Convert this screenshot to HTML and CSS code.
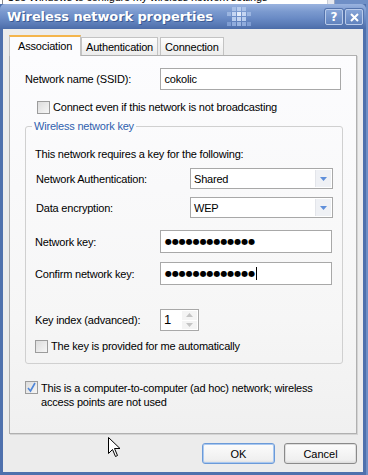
FILE: index.html
```html
<!DOCTYPE html>
<html lang="en">
<head>
    <meta charset="UTF-8">
    <title>Wireless network properties</title>
    <link rel="stylesheet" href="styles.css">
</head>
<body>
    <div class="behind">
        <div class="behind-text"><span class="behind-check"></span>Use Windows to configure my wireless network settings</div>
        <div class="behind-scroll"></div>
    </div>

    <div class="window">
        <div class="titlebar">
            <div class="title">Wireless network properties</div>
            <svg class="pattern" width="26" height="20" viewBox="0 0 26 20">
                <rect x="6" y="0" width="4" height="4" fill="#a9c0e6"/>
                <rect x="11" y="0" width="4" height="4" fill="#b8cdee"/>
                <rect x="16" y="0" width="4" height="4" fill="#a9c0e6"/>
                <rect x="1" y="5" width="4" height="4" fill="#9bb5e0"/>
                <rect x="6" y="5" width="4" height="4" fill="#c6d6f2"/>
                <rect x="11" y="5" width="4" height="4" fill="#e4ecf9"/>
                <rect x="16" y="5" width="4" height="4" fill="#c6d6f2"/>
                <rect x="21" y="5" width="4" height="4" fill="#9bb5e0"/>
                <rect x="6" y="10" width="4" height="4" fill="#b8cdee"/>
                <rect x="11" y="10" width="4" height="4" fill="#c6d6f2"/>
                <rect x="16" y="10" width="4" height="4" fill="#b8cdee"/>
                <rect x="1" y="15" width="4" height="4" fill="#7f9dd2"/>
                <rect x="6" y="15" width="4" height="4" fill="#8fabdc"/>
                <rect x="11" y="15" width="4" height="4" fill="#9bb5e0"/>
                <rect x="16" y="15" width="4" height="4" fill="#8fabdc"/>
                <rect x="21" y="15" width="4" height="4" fill="#7f9dd2"/>
            </svg>
            <div class="caption-buttons">
                <div class="cap-btn">?</div>
                <div class="cap-btn">
                    <svg width="9" height="9" viewBox="0 0 9 9">
                        <path d="M1 1 L8 8 M8 1 L1 8" stroke="#fff" stroke-width="2"/>
                    </svg>
                </div>
            </div>
        </div>

        <div class="client">
            <div class="tabs">
                <div class="tab active">Association</div>
                <div class="tab">Authentication</div>
                <div class="tab">Connection</div>
            </div>

            <div class="panel">
                <div class="row ssid-row">
                    <label class="lbl-wide">Network name (SSID):</label>
                    <div class="textbox ssid">cokolic</div>
                </div>

                <div class="check-row indent">
                    <span class="checkbox"></span>
                    <span>Connect even if this network is not broadcasting</span>
                </div>

                <div class="group">
                    <div class="legend">Wireless network key</div>
                    <div class="group-intro">This network requires a key for the following:</div>

                    <div class="row sel-row">
                        <label class="lbl-sel">Network Authentication:</label>
                        <div class="combo">
                            <span>Shared</span>
                            <span class="combo-btn">
                                <svg width="7" height="4" viewBox="0 0 7 4"><path d="M0 0 H7 L3.5 4 Z" fill="#5f8fda"/></svg>
                            </span>
                        </div>
                    </div>
                    <div class="row sel-row">
                        <label class="lbl-sel">Data encryption:</label>
                        <div class="combo">
                            <span>WEP</span>
                            <span class="combo-btn">
                                <svg width="7" height="4" viewBox="0 0 7 4"><path d="M0 0 H7 L3.5 4 Z" fill="#5f8fda"/></svg>
                            </span>
                        </div>
                    </div>

                    <div class="row key-row first-key">
                        <label class="lbl-key">Network key:</label>
                        <div class="textbox key"><span class="dots">●●●●●●●●●●●●●</span></div>
                    </div>
                    <div class="row key-row">
                        <label class="lbl-key">Confirm network key:</label>
                        <div class="textbox key"><span class="dots">●●●●●●●●●●●●●</span><span class="caret"></span></div>
                    </div>

                    <div class="row index-row">
                        <label class="lbl-key">Key index (advanced):</label>
                        <div class="spin">
                            <span class="spin-val">1</span>
                            <span class="spin-btns">
                                <span class="spin-btn"><svg width="7" height="4" viewBox="0 0 7 4"><path d="M0 4 H7 L3.5 0 Z" fill="#c4c4c4"/></svg></span>
                                <span class="spin-btn"><svg width="7" height="4" viewBox="0 0 7 4"><path d="M0 0 H7 L3.5 4 Z" fill="#c4c4c4"/></svg></span>
                            </span>
                        </div>
                    </div>

                    <div class="check-row auto-row">
                        <span class="checkbox"></span>
                        <span>The key is provided for me automatically</span>
                    </div>
                </div>

                <div class="check-row adhoc">
                    <span class="checkbox checked">
                        <svg width="11" height="11" viewBox="0 0 11 11"><path d="M2 6 L4.5 9 L9 1" stroke="#4f86d9" stroke-width="1.6" fill="none"/></svg>
                    </span>
                    <span>This is a computer-to-computer (ad hoc) network; wireless access points are not used</span>
                </div>
            </div>

            <div class="buttons">
                <button class="btn default">OK</button>
                <button class="btn">Cancel</button>
            </div>
        </div>
    </div>

    <svg class="cursor" width="13" height="21" viewBox="0 0 13 21">
        <path d="M0.5 0.5 L0.5 16.5 L4.5 12.5 L7.5 19.5 L9.5 18.5 L6.5 11.5 L12 11.5 Z" fill="#fff" stroke="#000" stroke-width="1"/>
    </svg>
</body>
</html>
```

FILE: styles.css
```css
* {
    margin: 0;
    padding: 0;
    box-sizing: border-box;
}

html, body {
    width: 368px;
    height: 475px;
    overflow: hidden;
}

body {
    font-family: 'Liberation Sans', Arial, sans-serif;
    font-size: 11px;
    letter-spacing: -0.2px;
    color: #000;
    background: #6f8fc6;
    position: relative;
}

/* strip of the window behind the dialog */
.behind {
    height: 4px;
    display: flex;
    overflow: hidden;
}

.behind-text {
    width: 327px;
    height: 13px;
    background: #fff;
    font-size: 11px;
    line-height: 13px;
    white-space: nowrap;
    overflow: hidden;
    position: relative;
    top: -9px;
    display: flex;
    align-items: flex-start;
}

.behind-check {
    width: 3px;
    height: 13px;
    border-right: 1px solid #8a8a8a;
    margin-right: 4px;
}

.behind-scroll {
    width: 8px;
    background: #e6e8ee;
    border-left: 1px solid #c9ced8;
    border-right: 1px solid #9aa6bf;
}

.window {
    width: 366px;
    height: 471px;
    background: #4f71ad;
    padding: 0 3px 3px 3px;
    display: flex;
    flex-direction: column;
}

.titlebar {
    height: 25px;
    margin: 0 -3px;
    padding: 0 3px 0 7px;
    background: linear-gradient(#9ab3df 0%, #7b9acf 30%, #6b8cc6 55%, #5778b4 85%, #4b6ca8 100%);
    display: flex;
    align-items: center;
    border-radius: 5px 5px 0 0;
}

.title {
    color: #fff;
    font-family: 'DejaVu Sans', sans-serif;
    font-weight: bold;
    font-size: 13px;
    letter-spacing: -0.1px;
    text-shadow: 1px 1px 0 #3a5a94;
    flex: 1;
}

.pattern {
    margin-right: 73px;
}

.caption-buttons {
    display: flex;
    gap: 2px;
    margin-top: 1px;
}

.cap-btn {
    width: 18px;
    height: 16px;
    border: 1px solid #b9cbea;
    border-radius: 2px;
    box-shadow: 0 0 0 1px #5574ad;
    background: linear-gradient(#86a4d7, #6183be);
    color: #fff;
    font-weight: bold;
    font-size: 12px;
    display: flex;
    align-items: center;
    justify-content: center;
    font-family: 'DejaVu Sans', sans-serif;
}

.client {
    flex: 1;
    background: #ececec;
    padding: 6px 6px 0 6px;
    display: flex;
    flex-direction: column;
}

.tabs {
    display: flex;
    align-items: flex-end;
    height: 20px;
    position: relative;
    z-index: 1;
}

.tab {
    height: 18px;
    padding: 0 4px;
    border: 1px solid #c3c3c3;
    border-bottom: none;
    background: linear-gradient(#fdfdfd, #ececec);
    display: flex;
    align-items: center;
    margin-right: 2px;
}

.tab.active {
    height: 21px;
    margin-bottom: -1px;
    margin-right: 0;
    background: #fcfcfe;
    border-top: 2px solid #f4b54c;
    padding: 0 8px 1px 8px;
}

.panel {
    height: 379px;
    width: 348px;
    border: 1px solid #b0b0b0;
    background: linear-gradient(#fcfcfe 0%, #f6f6f6 70%, #f0f0f0 100%);
    padding: 12px 15px 0 15px;
    box-shadow: 1px 1px 0 #d4d4d4;
}

.row {
    display: flex;
    align-items: center;
}

.lbl-wide {
    width: 135px;
}

.textbox {
    height: 23px;
    border: 1px solid #a8a8a8;
    background: #fff;
    display: flex;
    align-items: center;
    padding-left: 4px;
}

.ssid {
    width: 182px;
    height: 22px;
}

.check-row {
    display: flex;
    align-items: flex-start;
    gap: 3px;
}

.indent {
    margin-top: 11px;
    margin-left: 12px;
}

.checkbox {
    width: 13px;
    height: 13px;
    border: 1px solid #9c9c9c;
    background: linear-gradient(135deg, #dcdcdc, #f6f6f6);
    flex-shrink: 0;
    display: flex;
    align-items: center;
    justify-content: center;
}

.group {
    margin-top: 12px;
    height: 238px;
    width: 318px;
    border: 1px solid #d0d0d0;
    border-radius: 3px;
    padding: 0 9px;
}

.legend {
    color: #2f5fae;
    background: #fbfbfc;
    display: inline-block;
    padding: 0 2px;
    margin: -7px 0 0 -3px;
    line-height: 13px;
    vertical-align: top;
}

.group-intro {
    margin-top: 9px;
}

.sel-row {
    margin-top: 8px;
    height: 21px;
}

.lbl-sel {
    width: 155px;
    padding-left: 1px;
}

.combo {
    width: 143px;
    height: 21px;
    border: 1px solid #a8a8a8;
    background: #fff;
    display: flex;
    align-items: center;
    padding-left: 3px;
}

.combo span:first-child {
    flex: 1;
}

.combo-btn {
    width: 16px;
    height: 17px;
    margin-right: 1px;
    background: #eff1f5;
    border-left: 1px solid #e3e5ea;
    display: flex;
    align-items: center;
    justify-content: center;
}

.key-row {
    height: 23px;
}

.first-key {
    margin-top: 12px;
}

.key-row + .key-row {
    margin-top: 9px;
}

.lbl-key {
    width: 125px;
}

.key {
    width: 172px;
    padding-left: 4px;
}

.dots {
    font-family: 'DejaVu Sans', sans-serif;
    font-size: 8px;
    letter-spacing: -0.05px;
}

.caret {
    width: 1px;
    height: 13px;
    background: #000;
    margin-left: 1px;
}

.index-row {
    margin-top: 24px;
    height: 22px;
}

.spin {
    width: 39px;
    height: 22px;
    border: 1px solid #a8a8a8;
    background: #fff;
    display: flex;
    padding: 1px;
}

.spin-val {
    flex: 1;
    padding-left: 2px;
    font-size: 13px;
    line-height: 18px;
}

.spin-btns {
    width: 15px;
    display: flex;
    flex-direction: column;
    gap: 1px;
}

.spin-btn {
    flex: 1;
    background: #f4f4f4;
    display: flex;
    align-items: center;
    justify-content: center;
}

.auto-row {
    margin-top: 9px;
}

.adhoc {
    margin-top: 17px;
    line-height: 14px;
    width: 300px;
}

.adhoc span:last-child {
    width: 285px;
}

.buttons {
    display: flex;
    justify-content: flex-end;
    gap: 9px;
    margin-top: 9px;
}

.btn {
    width: 73px;
    height: 21px;
    font-family: 'Liberation Sans', Arial, sans-serif;
    font-size: 11px;
    background: linear-gradient(#fcfcfc, #efefef 85%, #dcdcdc);
    border: 1px solid #8a8a8a;
    border-radius: 3px;
    box-shadow: inset 0 0 0 1px #dedede;
    color: #000;
}

.btn.default {
    border-color: #6b9ad8;
    box-shadow: inset 0 0 0 1px #a9c8f0;
}

.cursor {
    position: absolute;
    left: 108px;
    top: 437px;
}
```
